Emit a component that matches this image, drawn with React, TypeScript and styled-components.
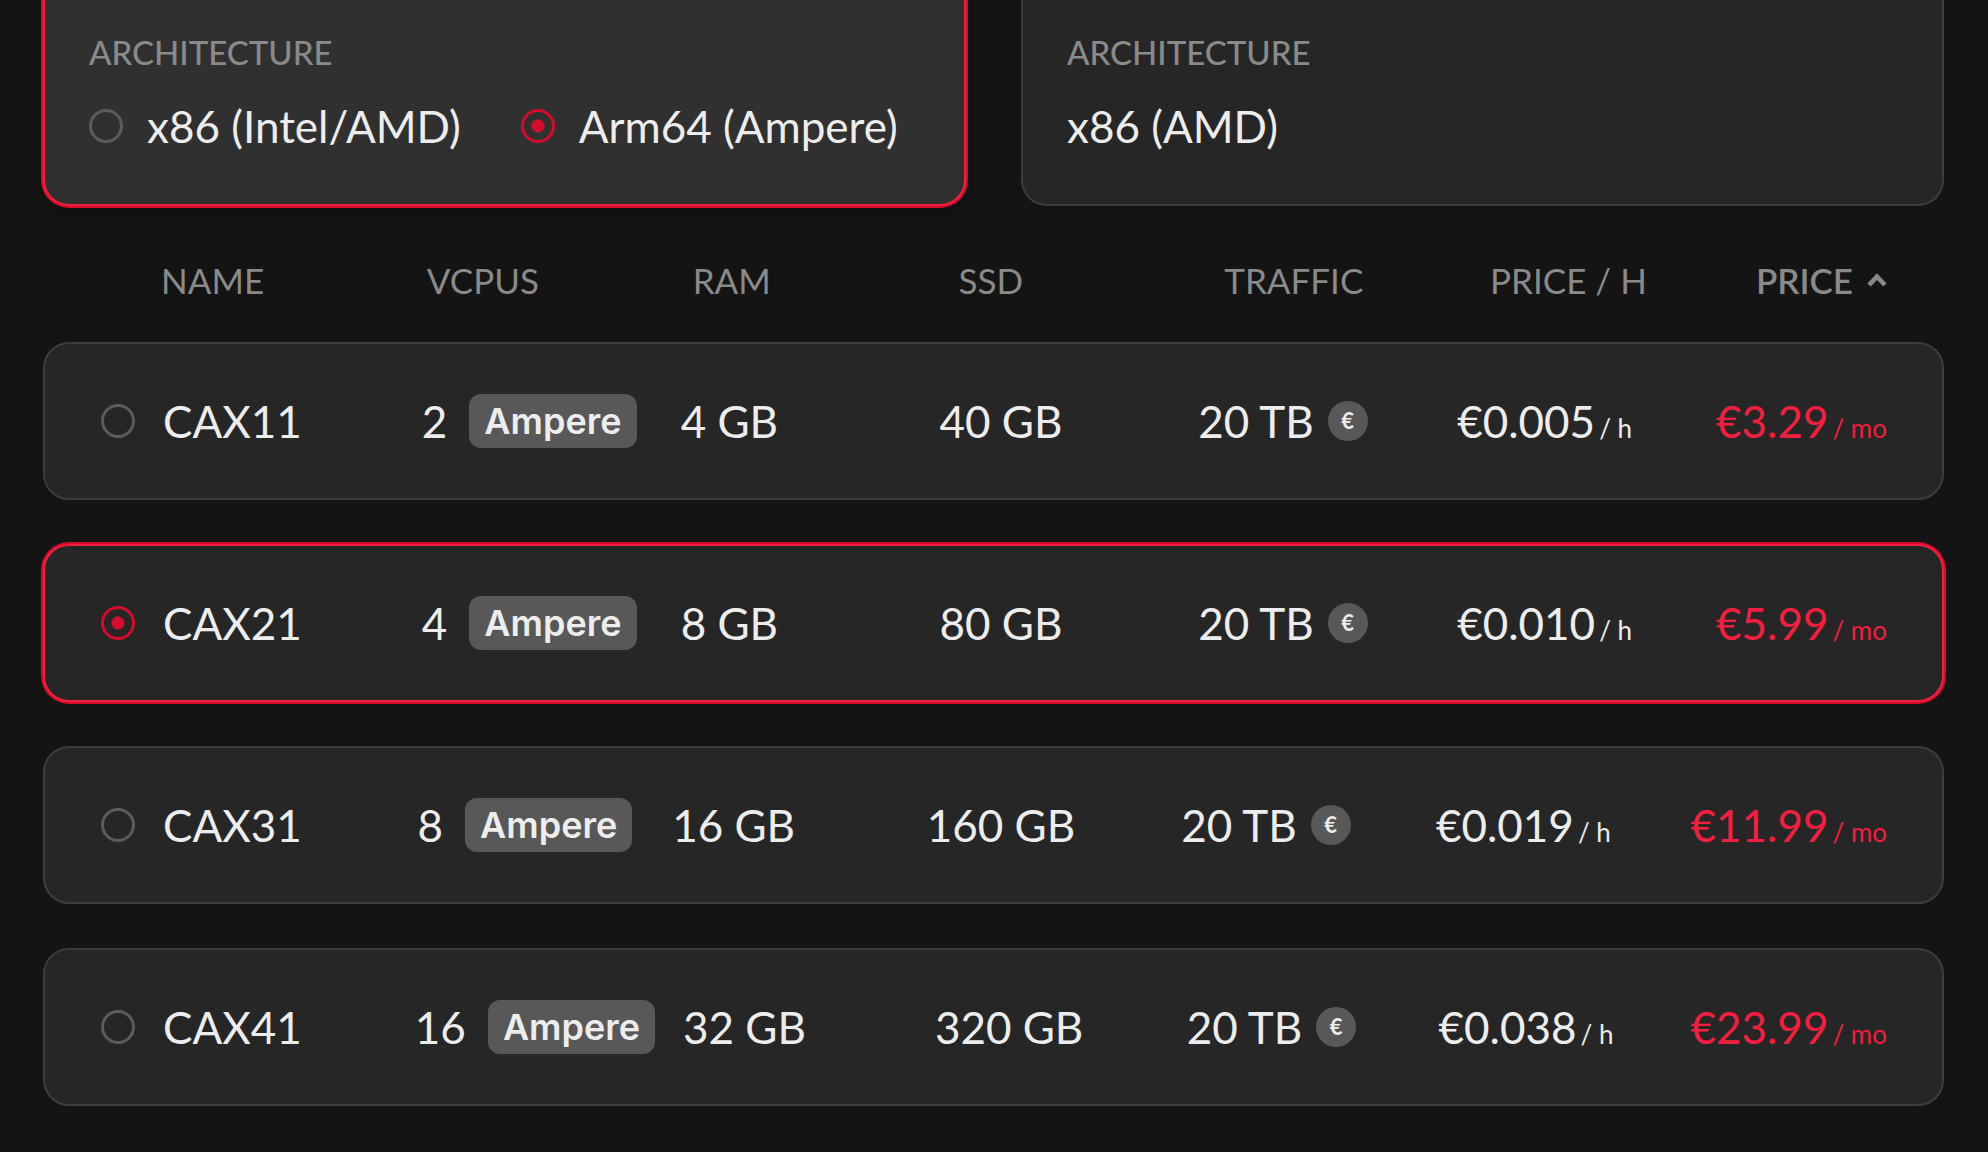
import React, { useState } from "react";
import styled, { createGlobalStyle, css } from "styled-components";

const Global = createGlobalStyle`
  * { box-sizing: border-box; }
  body {
    margin: 0;
    background: #141414;
    color: #ededed;
    font-family: Lato, "Noto Sans", sans-serif;
    font-size: 44px;
    line-height: 56px;
  }
`;

const Page = styled.main`
  padding: 0 44px 44px 43px;
`;

const Cards = styled.section`
  display: grid;
  grid-template-columns: 1fr 1fr;
  gap: 55px;
`;

const Card = styled.article<{ $selected?: boolean }>`
  padding: 32px 44px 52px;
  border: 2px solid #3d3d3d;
  border-top: 0;
  border-radius: 0 0 26px 26px;
  background: ${(p) => (p.$selected ? "#303030" : "#262626")};
  ${(p) =>
    p.$selected &&
    css`
      border-color: #f41f40;
      box-shadow: 0 0 0 2px #d50c2d, 0 4px 12px 2px rgba(0, 0, 0, 0.3);
    `}
`;

const CardTitle = styled.h3`
  margin: 0 0 28px;
  color: #8a8a8a;
  font-size: 33px;
  font-weight: 500;
  line-height: 40px;
`;

const Options = styled.div`
  display: flex;
  align-items: center;
  gap: 60px;
  line-height: 52px;
  white-space: nowrap;
`;

const Option = styled.label`
  display: flex;
  align-items: center;
  gap: 24px;
`;

const Radio = styled.input.attrs({ type: "radio" })`
  appearance: none;
  flex: none;
  width: 34px;
  height: 34px;
  margin: 0;
  border: 3px solid #5c5c5c;
  border-radius: 50%;
  &:checked {
    border-color: #d50c2d;
    background: radial-gradient(circle, #d50c2d 6px, transparent 7px);
  }
`;

const Table = styled.table`
  display: block;
`;

const Head = styled.thead`
  display: block;
`;

const Body = styled.tbody`
  display: flex;
  flex-direction: column;
  gap: 44px;
`;

const HeadRow = styled.tr`
  display: flex;
  align-items: center;
  padding: 52px 57px 40px 118px;
`;

const HeadCell = styled.th<{ $last?: boolean }>`
  flex: ${(p) => (p.$last ? "none" : "1 1 0")};
  padding: 0;
  font-weight: 400;
  line-height: 44px;
  text-align: left;
`;

const Sort = styled.button<{ $active?: boolean }>`
  display: flex;
  align-items: center;
  gap: 14px;
  padding: 0;
  border: 0;
  background: none;
  color: #8a8a8a;
  font: inherit;
  font-size: 35px;
  font-weight: ${(p) => (p.$active ? 600 : 400)};
  text-transform: uppercase;
  white-space: nowrap;
`;

const Row = styled.tr<{ $selected: boolean }>`
  display: flex;
  align-items: center;
  height: 158px;
  padding: 0 55px 0 56px;
  border: 2px solid #3d3d3d;
  border-radius: 26px;
  background: #262626;
  ${(p) =>
    p.$selected &&
    css`
      border-color: #f41f40;
      box-shadow: 0 0 0 2px #d50c2d;
    `}
`;

const PickCell = styled.td`
  display: flex;
  flex: none;
  width: 62px;
  padding: 0;
`;

const Cell = styled.td`
  display: flex;
  flex: 1 1 0;
  align-items: center;
  padding: 0 28px 0 0;
  line-height: 54px;
  white-space: nowrap;
`;

const PriceCell = styled(Cell)`
  flex: none;
  padding: 0;
  color: #f41f40;
`;

const Badge = styled.span`
  margin-left: 22px;
  padding: 0 15px;
  border-radius: 12px;
  background: #585858;
  font-family: Inter, "Noto Sans", sans-serif;
  font-size: 36px;
  font-weight: 600;
`;

const Euro = styled.button`
  width: 40px;
  height: 40px;
  margin-left: 14px;
  padding: 0;
  border: 0;
  border-radius: 50%;
  background: #585858;
  color: #ededed;
  font: inherit;
  font-size: 22px;
  font-weight: 700;
  line-height: 40px;
`;

const Unit = styled.small`
  margin-left: 4px;
  font-size: 26px;
  line-height: 26px;
`;

const Chevron = () => (
  <svg width="20" height="16" viewBox="0 0 20 16" fill="none" aria-hidden="true">
    <path d="M2 13 10 4.6 18 13" stroke="#8a8a8a" strokeWidth="4.6" />
  </svg>
);

const columns = ["Name", "vCPUs", "RAM", "SSD", "Traffic", "Price / h", "Price"];

const plans = [
  { name: "CAX11", cpus: 2, ram: "4 GB", ssd: "40 GB", hour: "€0.005", month: "€3.29" },
  { name: "CAX21", cpus: 4, ram: "8 GB", ssd: "80 GB", hour: "€0.010", month: "€5.99" },
  { name: "CAX31", cpus: 8, ram: "16 GB", ssd: "160 GB", hour: "€0.019", month: "€11.99" },
  { name: "CAX41", cpus: 16, ram: "32 GB", ssd: "320 GB", hour: "€0.038", month: "€23.99" },
];

export default function App() {
  const [arch, setArch] = useState("arm");
  const [plan, setPlan] = useState("CAX21");
  return (
    <Page>
      <Global />
      <Cards>
        <Card $selected>
          <CardTitle>ARCHITECTURE</CardTitle>
          <Options>
            <Option>
              <Radio name="arch" checked={arch === "x86"} onChange={() => setArch("x86")} />
              x86 (Intel/AMD)
            </Option>
            <Option>
              <Radio name="arch" checked={arch === "arm"} onChange={() => setArch("arm")} />
              Arm64 (Ampere)
            </Option>
          </Options>
        </Card>
        <Card>
          <CardTitle>ARCHITECTURE</CardTitle>
          <Options>x86 (AMD)</Options>
        </Card>
      </Cards>
      <Table>
        <Head>
          <HeadRow>
            {columns.map((c) => (
              <HeadCell key={c} $last={c === "Price"} scope="col">
                <Sort type="button" $active={c === "Price"}>
                  {c}
                  {c === "Price" && <Chevron />}
                </Sort>
              </HeadCell>
            ))}
          </HeadRow>
        </Head>
        <Body>
          {plans.map((p) => (
            <Row key={p.name} $selected={plan === p.name}>
              <PickCell>
                <Radio
                  id={p.name}
                  name="plan"
                  checked={plan === p.name}
                  onChange={() => setPlan(p.name)}
                />
              </PickCell>
              <Cell>
                <label htmlFor={p.name}>{p.name}</label>
              </Cell>
              <Cell>
                {p.cpus}
                <Badge>Ampere</Badge>
              </Cell>
              <Cell>{p.ram}</Cell>
              <Cell>{p.ssd}</Cell>
              <Cell>
                20 TB
                <Euro type="button">€</Euro>
              </Cell>
              <Cell>
                <span>
                  {p.hour}
                  <Unit>/ h</Unit>
                </span>
              </Cell>
              <PriceCell>
                <span>
                  {p.month}
                  <Unit>/ mo</Unit>
                </span>
              </PriceCell>
            </Row>
          ))}
        </Body>
      </Table>
    </Page>
  );
}
